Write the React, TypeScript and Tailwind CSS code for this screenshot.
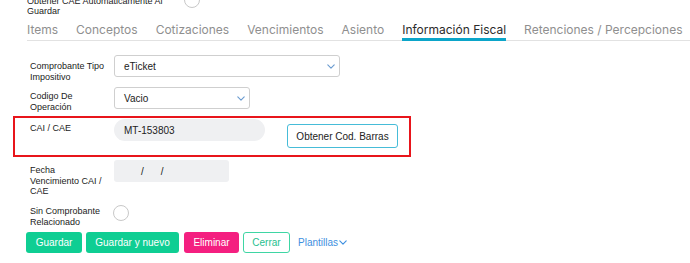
import React from 'react';

const tabs = ['Items', 'Conceptos', 'Cotizaciones', 'Vencimientos', 'Asiento', 'Información Fiscal', 'Retenciones / Percepciones'];

function Chevron({ className }: { className?: string }) {
  return (
    <svg viewBox="0 0 10 6" className={className} fill="none" stroke="currentColor" strokeWidth="1.4" strokeLinecap="round" strokeLinejoin="round">
      <path d="M1 1l4 4 4-4" />
    </svg>
  );
}

function Label({ children, className = '' }: { children: React.ReactNode; className?: string }) {
  return <div className={`w-[84px] shrink-0 text-[9px] leading-[10.5px] text-[#222] ${className}`}>{children}</div>;
}

export default function App() {
  return (
    <div className="relative w-[690px] h-[263px] overflow-hidden bg-white font-['Liberation_Sans',Arial,sans-serif]">
      {/* top switch row */}
      <div className="flex items-start mt-[-8px] h-[24px] pl-[27px]">
        <div className="w-[157px] pt-[3.5px] text-[9px] leading-[10.5px] text-[#222]">
          Obtener CAE Automaticamente Al
          <br />
          Guardar
        </div>
        <div className="w-4 h-4 rounded-full border border-[#c8c8c8] bg-white" />
      </div>

      {/* tabs */}
      <div className="ml-[27px] h-[25px] flex items-end gap-[18px] border-b border-[#e2e2e2] font-['Inter',sans-serif] text-[12px] whitespace-nowrap">
        {tabs.map((t) =>
          t === 'Información Fiscal' ? (
            <div key={t} className="-mb-px pb-[1px] leading-[14px] border-b-[3px] border-[#0ba5c9] text-[#2b2b2b]">
              {t}
            </div>
          ) : (
            <div key={t} className="pb-[3px] leading-[14px] text-[#8f8f8f]">
              {t}
            </div>
          )
        )}
      </div>

      {/* row 1 */}
      <div className="flex items-start pl-[30px] mt-[14px]">
        <Label className="pt-[6px]">
          Comprobante Tipo
          <br />
          Impositivo
        </Label>
        <div className="w-[226px] h-[22px] border border-[#cfcfcf] rounded-[3px] flex items-center justify-between pl-[9px] pr-[4px] text-[10px] text-[#222]">
          <span>eTicket</span>
          <Chevron className="w-[8px] h-[5px] text-[#6a9bd0]" />
        </div>
      </div>

      {/* row 2 */}
      <div className="flex items-start pl-[30px] mt-[5px]">
        <Label className="pt-[4px]">
          Codigo De
          <br />
          Operación
        </Label>
        <div className="w-[136px] h-[22px] border border-[#cfcfcf] rounded-[3px] flex items-center justify-between pl-[9px] pr-[4px] text-[10px] text-[#222]">
          <span>Vacio</span>
          <Chevron className="w-[8px] h-[5px] text-[#6a9bd0]" />
        </div>
      </div>

      {/* highlighted row */}
      <div className="ml-[13px] mt-[4px] w-[398px] h-[41px] border-2 border-[#e8151b] flex items-start pl-[15px] pt-[1px]">
        <Label className="pt-[4px]">CAI / CAE</Label>
        <div className="w-[151px] h-[22px] rounded-full bg-[#eff0f2] flex items-center pl-[10px] text-[10px] text-[#222]">
          MT-153803
        </div>
        <div className="ml-[22px] mt-[5px] w-[111px] h-[24px] border border-[#46bcd8] rounded-[3px] flex items-center justify-center text-[10px] text-[#222]">
          Obtener Cod. Barras
        </div>
      </div>

      {/* row 4 */}
      <div className="flex items-start pl-[30px] mt-[3px]">
        <Label className="pt-[5px]">
          Fecha
          <br />
          Vencimiento CAI /
          <br />
          CAE
        </Label>
        <div className="w-[115px] h-[22px] rounded-[3px] bg-[#eff0f2] flex items-center text-[10px] text-[#222]">
          <span className="pl-[27px]">/</span>
          <span className="pl-[17px]">/</span>
        </div>
      </div>

      {/* row 5 */}
      <div className="flex items-start pl-[30px] mt-[8.5px]">
        <Label className="pt-[1px]">
          Sin Comprobante
          <br />
          Relacionado
        </Label>
        <div className="-ml-[1px] w-4 h-4 rounded-full border border-[#c8c8c8] bg-white" />
      </div>

      {/* buttons */}
      <div className="flex items-center gap-[4px] pl-[26px] mt-[5px] text-[10px]">
        <div className="w-[56px] h-[21px] rounded-[3px] bg-[#0fce93] text-white flex items-center justify-center">Guardar</div>
        <div className="w-[93px] h-[21px] rounded-[3px] bg-[#0fce93] text-white flex items-center justify-center">Guardar y nuevo</div>
        <div className="ml-[1px] w-[55px] h-[21px] rounded-[3px] bg-[#f41f80] text-white flex items-center justify-center">Eliminar</div>
        <div className="w-[47px] h-[21px] rounded-[3px] border border-[#3fd6a4] bg-white text-[#1fc08e] flex items-center justify-center">Cerrar</div>
        <div className="ml-[4px] flex items-center gap-[1px] text-[#3d8fe0]">
          <span>Plantillas</span>
          <Chevron className="w-[8px] h-[5px]" />
        </div>
      </div>
    </div>
  );
}
